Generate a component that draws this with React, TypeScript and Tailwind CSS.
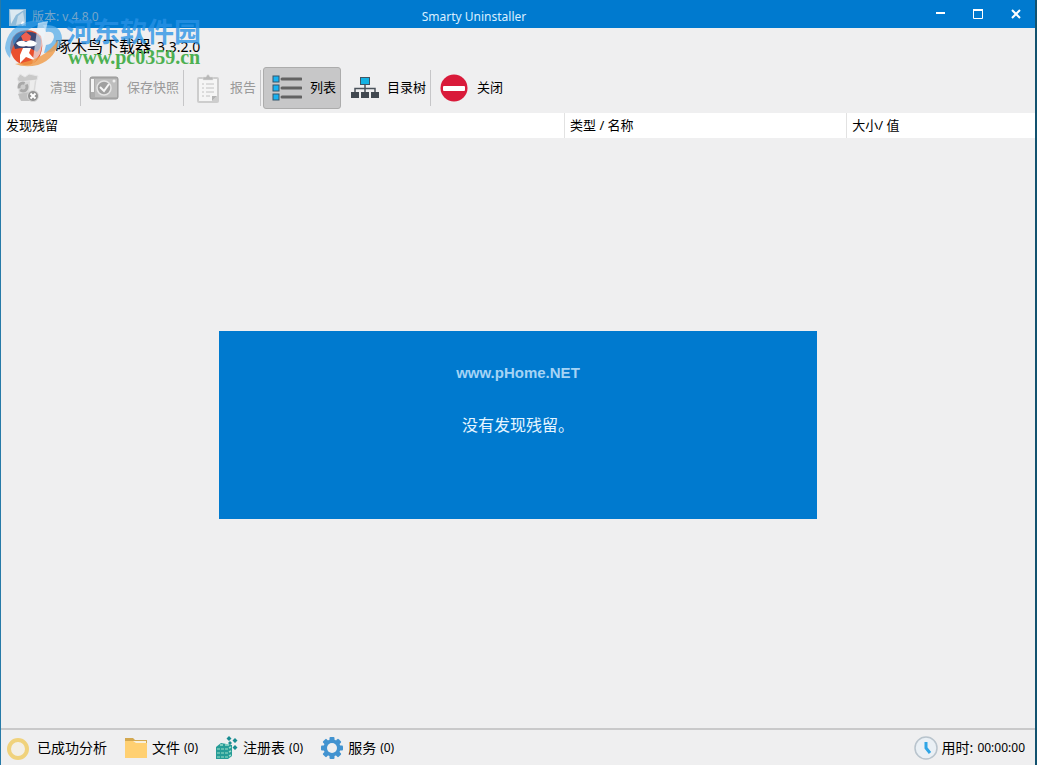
import type { ReactNode } from "react";

const disabledText = "text-[#9a9a9a]";

function TrashIcon() {
  return (
    <svg width="30" height="30" viewBox="0 0 30 30">
      <path d="M6 5 L25 3 L22 25 Q15 29 7 26 Z" fill="#d9d9d9" />
      <path d="M5 6 L8 1 L13 4 L17 1 L26 3 L25 7 L7 9 Z" fill="#c9c9c9" stroke="#e6e6e7" />
      <path d="M18 8 L23 7 L21 21 L17 22 Z" fill="#ececec" />
      <circle cx="11" cy="14" r="4" fill="#cdcdcd" stroke="#a8a8a8" strokeWidth="3" strokeDasharray="9 2" />
      <path d="M6 21 L18 19 L18 28 L9 28 Z" fill="#c0c0c0" />
      <circle cx="21" cy="23" r="5.500" fill="#929292" stroke="#dcdcdc" />
      <path d="M18.500 20.500 L23.500 25.500 M23.500 20.500 L18.500 25.500" stroke="#fff" strokeWidth="2" />
    </svg>
  );
}

function CameraIcon() {
  return (
    <svg width="30" height="30" viewBox="0 0 30 30">
      <rect x="1" y="4" width="28" height="22" rx="2" fill="#adadad" stroke="#959595" />
      <rect x="6" y="6" width="22" height="18" fill="#bebebe" />
      <rect x="2" y="6" width="3" height="13" fill="#f5f5f5" />
      <circle cx="15" cy="15" r="7" fill="#a0a0a0" stroke="#e4e4e4" strokeWidth="1.500" />
      <path d="M11 14 L15 18 L20 11" fill="none" stroke="#f6f6f6" strokeWidth="2" />
      <circle cx="25" cy="8" r="1.500" fill="#eee" />
    </svg>
  );
}

function ClipboardIcon() {
  return (
    <svg width="30" height="30" viewBox="0 0 30 30">
      <rect x="5" y="4" width="22" height="26" rx="2" fill="#cdcdcd" />
      <path d="M7 6 H25 V23 L20 28 H7 Z" fill="#f5f5f5" />
      <path d="M20 28 V23 H25 Z" fill="#b3b3b3" />
      <path d="M11 7 V4 H14 Q16 -1 18 4 H21 V7 Z" fill="#b8b8b8" stroke="#e2e2e2" strokeWidth="0.500" />
      <path d="M10 11 H12 M10 15 H12 M10 19 H12 M10 23 H12 M14 11 H22 M14 15 H22 M14 19 H22 M14 23 H18" stroke="#c2c2c2" />
    </svg>
  );
}

function ListIcon() {
  return (
    <svg width="30" height="30" viewBox="0 0 30 30">
      {[3, 12, 21].map((y) => (
        <g key={y}>
          <rect x="1" y={y} width="6" height="6" fill="#19b1f0" stroke="#34566b" />
          <path d={`M10 ${y + 3} H29`} stroke="#626262" strokeWidth="3" strokeLinecap="round" />
        </g>
      ))}
    </svg>
  );
}

function TreeIcon() {
  return (
    <svg width="30" height="30" viewBox="0 0 30 30">
      <path d="M16 12 V21 M6 21 V15.500 H26 V21" fill="none" stroke="#4b535b" strokeWidth="1.500" />
      <rect x="11.500" y="4.500" width="9" height="7" fill="#14b3e4" stroke="#3f5564" />
      <rect x="2" y="19" width="8" height="6" fill="#414850" />
      <rect x="12" y="19" width="8" height="6" fill="#414850" />
      <rect x="22" y="19" width="8" height="6" fill="#414850" />
    </svg>
  );
}

function NoEntryIcon() {
  return (
    <svg width="30" height="30" viewBox="0 0 30 30">
      <circle cx="15" cy="15" r="13.500" fill="#d91a3a" />
      <rect x="4" y="13" width="22" height="5" rx="1" fill="#fff" />
    </svg>
  );
}

function RingIcon() {
  return (
    <svg width="24" height="24" viewBox="0 0 24 24">
      <circle cx="12" cy="13" r="9" fill="#f3efe6" stroke="#f0d27c" strokeWidth="4" />
    </svg>
  );
}

function FolderIcon() {
  return (
    <svg width="24" height="24" viewBox="0 0 24 24">
      <path d="M1 2 H9 L11 4 H23 V10 H1 Z" fill="#d3a850" />
      <path d="M3 5 H22 V8 H3 Z" fill="#f7f0dd" />
      <path d="M1 5 H9 L12 7 H23 V22 H1 Z" fill="#ffd072" />
    </svg>
  );
}

function RegistryIcon() {
  return (
    <svg width="24" height="24" viewBox="0 0 24 24">
      <path d="M1 11 L6 7 L17 9 V20 L13 23 H1 Z" fill="#269c97" />
      <path d="M2 12 H5 V14 H2 Z M6 12 H9 V14 H6 Z M10 12 H13 V14 H10 Z M2 16 H5 V18 H2 Z M6 16 H9 V18 H6 Z M10 16 H13 V18 H10 Z M2 20 H5 V22 H2 Z M6 20 H9 V22 H6 Z M10 20 H13 V22 H10 Z" fill="#63bfb0" />
      <path d="M14 12 L16 11 M14 16 L16 15 M14 20 L16 19 M5 9 H8 M10 9 H14" stroke="#9bdcca" strokeWidth="1.500" />
      <path d="M14 0 L16.500 2.500 L14 5 L11.500 2.500 Z M20 2 L22.500 4.500 L20 7 L17.500 4.500 Z M20 9 L22.500 11.500 L20 14 L17.500 11.500 Z M15 5 L17 7 L15 9 L13 7 Z" fill="#178c91" />
    </svg>
  );
}

function GearIcon() {
  return (
    <svg width="24" height="24" viewBox="0 0 24 24">
      <g fill="#4293d0">
        {[0, 45, 90, 135].map((angle) => (
          <rect key={angle} x="9.500" y="1" width="5" height="22" rx="1" transform={`rotate(${angle} 12 12)`} />
        ))}
        <circle cx="12" cy="12" r="8.500" />
      </g>
      <circle cx="12" cy="12" r="5" fill="#efeff0" />
    </svg>
  );
}

function ClockIcon() {
  return (
    <svg width="24" height="24" viewBox="0 0 24 24">
      <circle cx="12" cy="12" r="11" fill="#eaf0f5" stroke="#b9c4cd" strokeWidth="1.500" />
      <path d="M12 6 V12 L16 17" fill="none" stroke="#2fa5e6" strokeWidth="3" />
    </svg>
  );
}

function AppIcon() {
  return (
    <svg width="17" height="17" viewBox="0 0 17 17" className="shrink-0">
      <path d="M0 0 H17 V17 H0 Z" fill="#8fbbd9" />
      <path d="M1 1 H15 L7 6 L2 15 Z" fill="#dce9f1" />
      <path d="M9 7 L14 3 L16 14 L7 16 Z" fill="#c3dae9" />
      <path d="M14 12 L15 14 L17 14 L15 16 L13 17 L12 14 Z" fill="#fff" />
    </svg>
  );
}

function ProductIcon() {
  return (
    <svg width="44" height="38" viewBox="0 0 44 38" className="shrink-0">
      <path d="M1 20 Q2 6 12 3 Q24 0 32 8 Q35 18 31 28 Q26 38 15 37 Q3 34 1 20 Z" fill="#e9502f" />
      <path d="M4 14 Q4 5 14 4 Q28 2 32 11 Q33 20 28 24 L21 20 L12 20 L6 21 Z" fill="#3e4773" />
      <path d="M12 8 L17 4 L22 8 L21 13 H14 Z" fill="#f0604f" />
      <path d="M7 15 Q12 11 17 14 Q22 10 28 15 Q26 20 17 18 Q10 20 7 15 Z" fill="#fff" />
      <path d="M14 20 H22 L20 25 L27 33 L17 29 L11 35 L11 27 Z" fill="#fff" />
    </svg>
  );
}

function SiteWatermark() {
  return (
    <div className="pointer-events-none absolute top-[18px] left-1 h-[50px] w-[200px]">
      <svg width="62" height="50" viewBox="0 0 62 50" className="absolute top-0 left-0">
        <path d="M0 30 Q2 8 26 3 Q34 1 42 4 Q22 9 12 22 Q6 30 5 40 Q1 36 0 30 Z" fill="#3fa2e8" opacity="0.600" />
        <path d="M38 7 Q56 6 57 20 Q56 34 39 35 L41 27 Q48 26 49 19 Q49 13 41 14 Z" fill="#58aeea" opacity="0.750" />
        <path d="M33 5 L43 3 L35 36 L27 48 Z" fill="#e9f4fc" opacity="0.650" />
        <path d="M10 46 Q40 42 53 22 Q52 40 33 47 Q20 50 10 46 Z" fill="#f09a45" opacity="0.800" />
      </svg>
      <div className="absolute top-0 left-[61px] text-[27px] leading-[28px] font-bold whitespace-nowrap text-[#2992e5]/80">
        河东软件园
      </div>
      <div className="absolute top-[28px] left-[63px] font-['Liberation_Serif',serif] text-[20px] leading-[22px] font-bold whitespace-nowrap text-[#4db052]">
        www.pc0359.cn
      </div>
    </div>
  );
}

interface ToolButtonProps {
  icon: ReactNode;
  label: string;
  disabled?: boolean;
}

function ToolButton({ icon, label, disabled }: ToolButtonProps) {
  return (
    <button
      type="button"
      disabled={disabled}
      className={`flex h-full items-center gap-2 pr-1 pl-2 text-[13px] whitespace-nowrap ${disabled ? disabledText : "text-black"}`}
    >
      {icon}
      <span>{label}</span>
    </button>
  );
}

function Separator() {
  return <div className="h-9 w-px shrink-0 bg-[#c6c6c8]" />;
}

interface StatusItemProps {
  icon: ReactNode;
  label: string;
  value?: string;
}

function StatusItem({ icon, label, value }: StatusItemProps) {
  return (
    <div className="flex items-center gap-1 whitespace-nowrap">
      {icon}
      <span>{label}</span>
      {value && <span className="text-[12px]">{value}</span>}
    </div>
  );
}

export default function App() {
  return (
    <div className="relative flex min-h-screen flex-col border-r-2 border-l border-r-[#12526f] border-l-[#267aa8] bg-[#efeff0] font-['Noto_Sans','Noto_Sans_CJK_SC',sans-serif] text-black">
      <header className="flex h-7 items-center bg-[#007acf]">
        <div className="flex w-7 items-center gap-1.5 pt-1.5 pl-2 text-[12px] whitespace-nowrap text-[#76a6ca]">
          <AppIcon />
          <span>版本: v 4.8.0</span>
        </div>
        <h1 className="flex-1 pt-1.5 text-center text-[12px] text-[#d9efff]">Smarty Uninstaller</h1>
        <div className="flex h-6 w-[116px] justify-end text-white">
          <button type="button" aria-label="最小化" className="flex w-[38px] items-center justify-center">
            <svg width="10" height="10" viewBox="0 0 10 10">
              <path d="M1 4 H10" stroke="currentColor" strokeWidth="2" />
            </svg>
          </button>
          <button type="button" aria-label="最大化" className="flex w-[38px] items-center justify-center">
            <svg width="10" height="10" viewBox="0 0 10 10">
              <path d="M0.500 1 V9.500 H9.500 V1" fill="none" stroke="currentColor" />
              <path d="M0 1 H10" stroke="currentColor" strokeWidth="2" />
            </svg>
          </button>
          <button type="button" aria-label="关闭窗口" className="flex w-[38px] items-center justify-center">
            <svg width="10" height="10" viewBox="0 0 10 10">
              <path d="M1 1 L9 9 M9 1 L1 9" stroke="currentColor" strokeWidth="2" />
            </svg>
          </button>
        </div>
      </header>

      <div className="flex h-[38px] items-center pl-2">
        <ProductIcon />
        <span className="ml-0.5 flex items-baseline gap-1.5 pb-0.5 text-[16px]">
          啄木鸟下载器 <span className="text-[14px]">3.3.2.0</span>
        </span>
      </div>

      <nav className="mb-1 flex h-[43px] items-center pl-[3px]">
        <ToolButton icon={<TrashIcon />} label="清理" disabled />
        <Separator />
        <ToolButton icon={<CameraIcon />} label="保存快照" disabled />
        <Separator />
        <ToolButton icon={<ClipboardIcon />} label="报告" disabled />
        <Separator />
        <div className="ml-0.5 h-[42px] rounded-[3px] border border-[#acacac] bg-[#c7c7c8]">
          <ToolButton icon={<ListIcon />} label="列表" />
        </div>
        <ToolButton icon={<TreeIcon />} label="目录树" />
        <Separator />
        <ToolButton icon={<NoEntryIcon />} label="关闭" />
      </nav>

      <table className="w-full table-fixed bg-white text-left text-[13px]">
        <thead>
          <tr className="h-[25px]">
            <th className="w-[54.5%] border-r border-[#e2e2e2] pl-[5px] font-normal">发现残留</th>
            <th className="w-[27.3%] border-r border-[#e2e2e2] pl-[5px] font-normal">类型 / 名称</th>
            <th className="pl-[5px] font-normal">大小/ 值</th>
          </tr>
        </thead>
      </table>

      <main className="flex flex-1 items-center justify-center pb-4">
        <div className="flex h-[188px] w-[57.8%] flex-col items-center bg-[#007acf] pt-7">
          <p className="font-['Liberation_Sans',sans-serif] text-[15px] leading-7 font-bold text-[#a4d3f5]">www.pHome.NET</p>
          <p className="mt-6 text-[16px] leading-7 text-[#e6f5ff]">没有发现残留。</p>
        </div>
      </main>

      <footer className="flex h-[37px] items-center border-t-2 border-[#c9c9ca] pr-2.5 pl-[5px] text-[14px]">
        <div className="flex flex-1 items-center gap-[17px]">
          <div className="flex items-center gap-[7px]">
            <RingIcon />
            <span>已成功分析</span>
          </div>
          <StatusItem icon={<FolderIcon />} label="文件" value="(0)" />
          <StatusItem icon={<RegistryIcon />} label="注册表" value="(0)" />
          <StatusItem icon={<GearIcon />} label="服务" value="(0)" />
        </div>
        <div className="flex items-center gap-1 whitespace-nowrap">
          <ClockIcon />
          <span>用时:</span>
          <span className="text-[12px]">00:00:00</span>
        </div>
      </footer>

      <SiteWatermark />
    </div>
  );
}
